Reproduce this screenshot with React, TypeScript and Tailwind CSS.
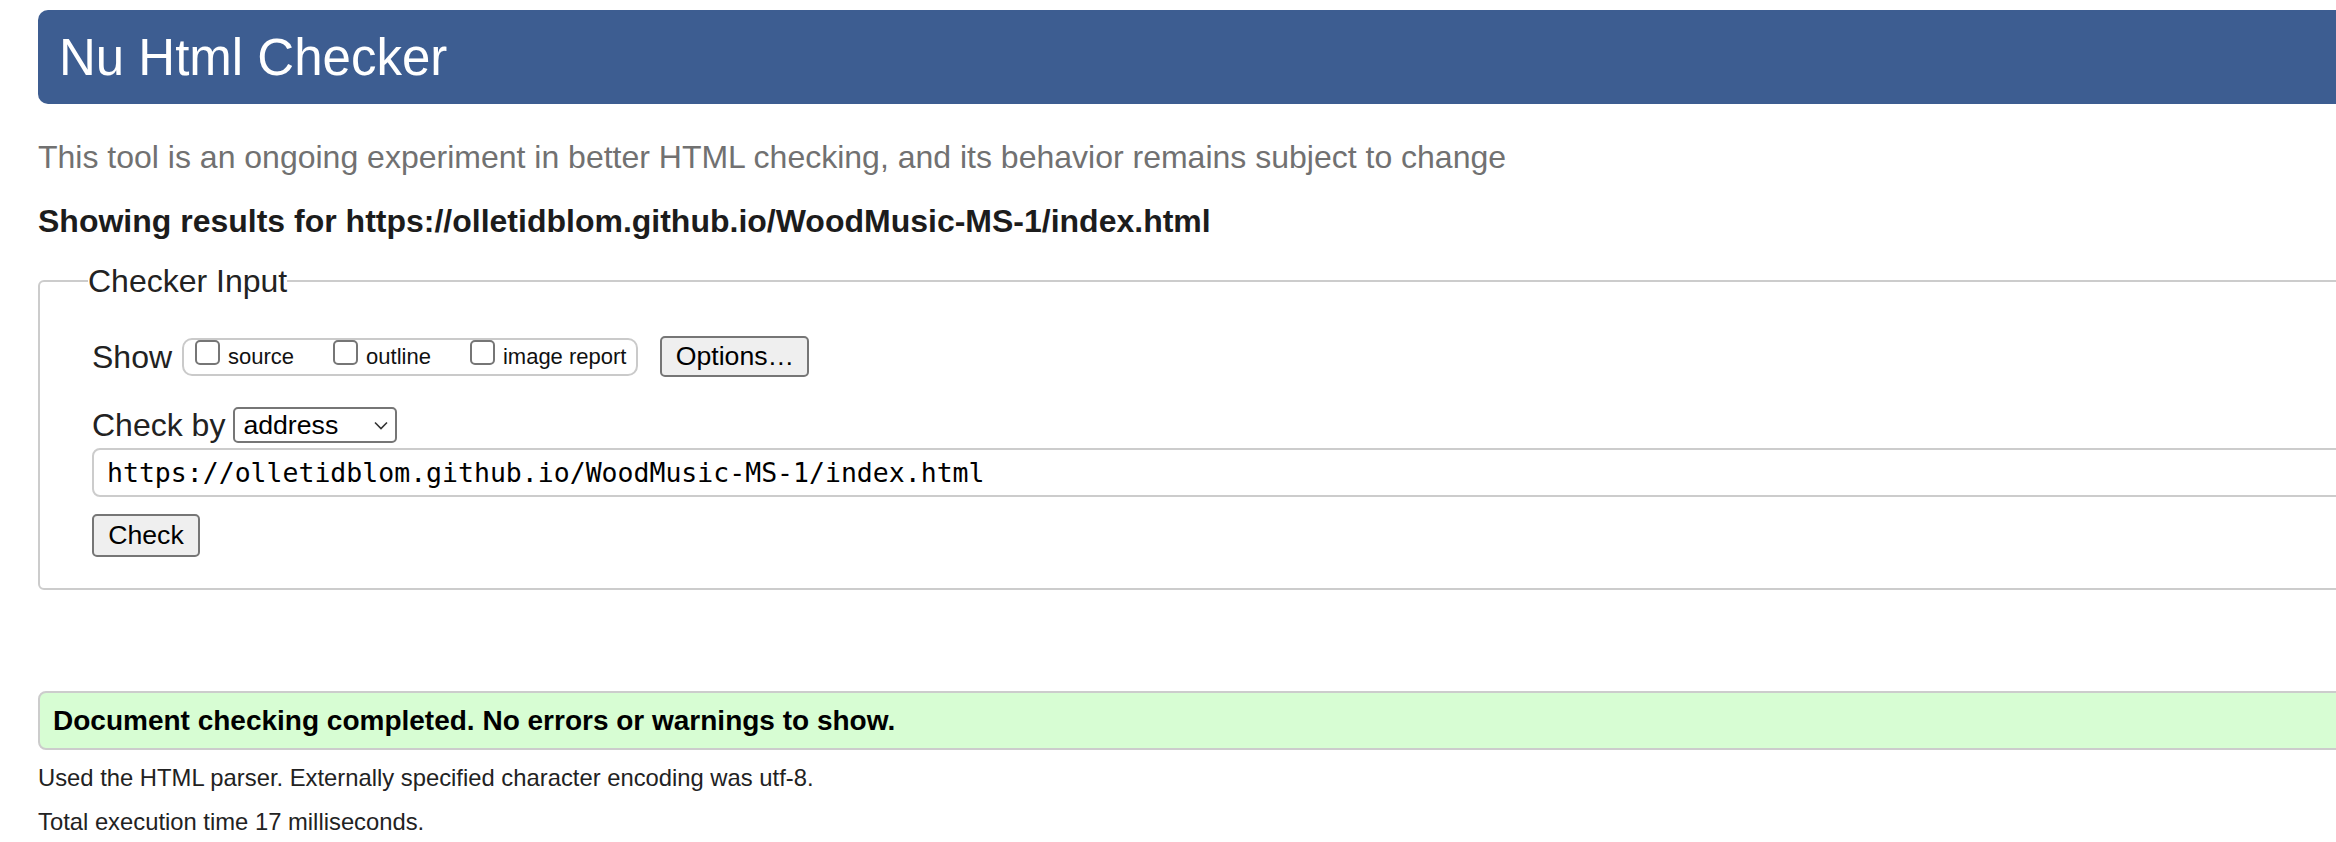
import { useState } from "react";

const showOptions = ["source", "outline", "image report"];

function Checkbox({ label }: { label: string }) {
  const [checked, setChecked] = useState(false);
  return (
    <label className="flex items-start cursor-pointer">
      <input
        type="checkbox"
        checked={checked}
        onChange={() => setChecked((c) => !c)}
        className="appearance-none w-[25px] h-[25px] rounded-[5px] border-2 border-[#767676] bg-white checked:bg-[#3d5d91]"
      />
      <span className="ml-[8px] mt-[6px] text-[22px] leading-none text-[#111]">
        {label}
      </span>
    </label>
  );
}

export default function App() {
  const [url, setUrl] = useState(
    "https://olletidblom.github.io/WoodMusic-MS-1/index.html"
  );

  return (
    <div className="w-full h-[842px] overflow-hidden bg-white font-['Liberation_Sans',Arial,sans-serif] text-[#222]">
      <div className="pl-[38px] pt-[10px] -mr-[80px]">
        {/* Title bar */}
        <div className="h-[94px] rounded-[10px] bg-[#3d5d91] flex items-center pl-[21px]">
          <h1 className="text-[51px] leading-none text-white">Nu Html Checker</h1>
        </div>

        <p className="mt-[37px] text-[32px] leading-none text-[#717171]">
          This tool is an ongoing experiment in better HTML checking, and its
          behavior remains subject to change
        </p>

        <h2 className="mt-[32px] text-[32px] leading-none font-bold text-[#1c1c1c]">
          Showing results for {url}
        </h2>

        {/* Checker input */}
        <fieldset className="mt-[28px] border-2 border-[#cccccc] rounded-[6px] pl-[52px] pb-[31px]">
          <legend className="-ml-[4px] text-[32px] leading-none text-[#222]">
            Checker Input
          </legend>

          <div className="mt-[39px] h-[41px] flex items-center">
            <span className="text-[32px] leading-none">Show</span>
            <div className="ml-[10px] h-[38px] flex items-start gap-[39px] border-2 border-[#cacaca] rounded-[10px] pl-[11px] pr-[10px]">
              {showOptions.map((o) => (
                <Checkbox key={o} label={o} />
              ))}
            </div>
            <button className="ml-[22px] w-[149px] h-[41px] rounded-[5px] border-2 border-[#767676] bg-[#efefef] text-[26.67px] leading-none text-black">
              Options…
            </button>
          </div>

          <div className="mt-[28px] h-[40px] flex items-center">
            <span className="text-[32px] leading-none">Check by</span>
            <div className="relative ml-[8px] w-[164px] h-[36px]">
              <select className="appearance-none w-full h-full rounded-[5px] border-2 border-[#767676] bg-white pl-[8px] text-[26.67px] leading-none text-black outline-none">
                <option>address</option>
                <option>file upload</option>
                <option>text input</option>
              </select>
              <svg
                width="14"
                height="9"
                viewBox="0 0 14 9"
                className="absolute right-[9px] top-[14px] pointer-events-none"
              >
                <path d="M1 1.5l6 6 6-6" fill="none" stroke="#333" strokeWidth="1.6" />
              </svg>
            </div>
          </div>

          <input
            type="text"
            value={url}
            onChange={(e) => setUrl(e.target.value)}
            className="mt-[3px] block w-full h-[49px] rounded-[8px] border-2 border-[#cccccc] pl-[13px] font-['DejaVu_Sans_Mono',monospace] text-[26.5px] text-black outline-none"
          />

          <button className="mt-[17px] block w-[108px] h-[43px] rounded-[5px] border-2 border-[#767676] bg-[#efefef] text-[26.67px] leading-none text-black">
            Check
          </button>
        </fieldset>

        {/* Result */}
        <div className="mt-[101px] h-[59px] flex items-center rounded-[8px] border-2 border-[#cccccc] bg-[#d7fdd3] pl-[13px]">
          <p className="text-[28px] leading-none font-bold text-black">
            Document checking completed. No errors or warnings to show.
          </p>
        </div>

        <p className="mt-[16px] text-[23.8px] leading-none">
          Used the HTML parser. Externally specified character encoding was utf-8.
        </p>
        <p className="mt-[20px] text-[23.8px] leading-none">
          Total execution time 17 milliseconds.
        </p>
      </div>
    </div>
  );
}
